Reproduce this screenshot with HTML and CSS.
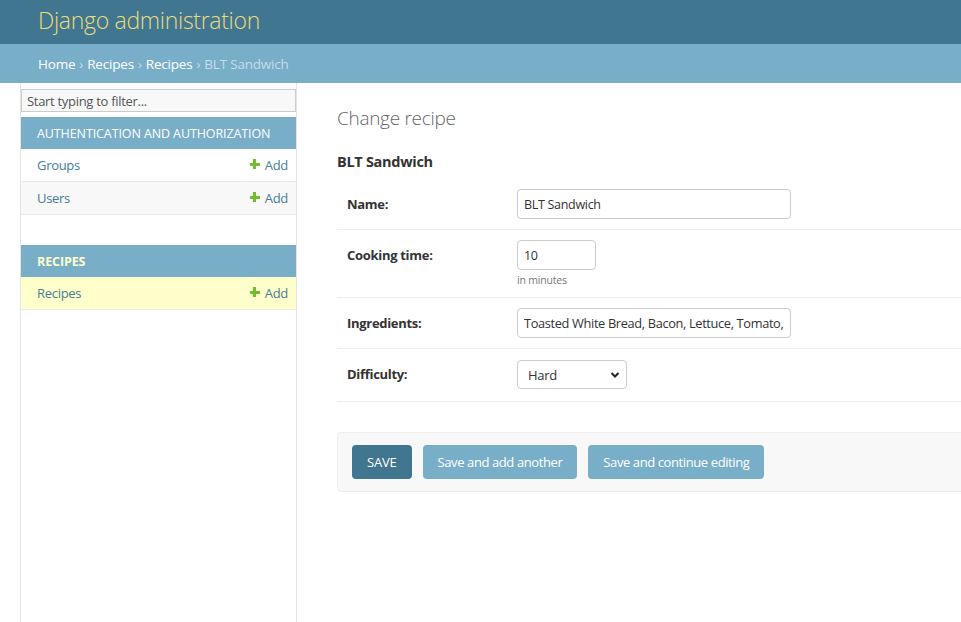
FILE: index.html
```html
<!DOCTYPE html>
<html lang="en">
<head>
<meta charset="utf-8">
<title>Change recipe | Django site admin</title>
<link rel="stylesheet" href="styles.css">
</head>
<body>
<header class="header">
  <h1 class="branding">Django administration</h1>
</header>
<nav class="breadcrumbs">
  <a href="#">Home</a><span class="sep">›</span><a href="#">Recipes</a><span class="sep">›</span><a href="#">Recipes</a><span class="sep">›</span><span class="current">BLT Sandwich</span>
</nav>
<div class="main">
  <aside class="sidebar">
    <input class="filter" type="search" placeholder="Start typing to filter...">
    <div class="module">
      <div class="caption">Authentication and Authorization</div>
      <div class="row"><a class="model" href="#">Groups</a><a class="add" href="#"><span class="plus"></span>Add</a></div>
      <div class="row alt"><a class="model" href="#">Users</a><a class="add" href="#"><span class="plus"></span>Add</a></div>
    </div>
    <div class="module current-app">
      <div class="caption">Recipes</div>
      <div class="row selected"><a class="model" href="#">Recipes</a><a class="add" href="#"><span class="plus"></span>Add</a></div>
    </div>
  </aside>
  <section class="content">
    <h1 class="title">Change recipe</h1>
    <h2 class="subtitle">BLT Sandwich</h2>
    <form class="form">
      <div class="form-row">
        <label class="label">Name:</label>
        <div class="field"><input class="input wide" type="text" value="BLT Sandwich"></div>
      </div>
      <div class="form-row">
        <label class="label">Cooking time:</label>
        <div class="field">
          <input class="input small" type="text" value="10">
          <div class="help">in minutes</div>
        </div>
      </div>
      <div class="form-row">
        <label class="label">Ingredients:</label>
        <div class="field"><input class="input wide ingredients" type="text" value="Toasted White Bread, Bacon, Lettuce, Tomato, Mayonnaise"></div>
      </div>
      <div class="form-row">
        <label class="label">Difficulty:</label>
        <div class="field">
          <div class="select">
            <span>Hard</span>
            <svg class="chev" width="10" height="8" viewBox="0 0 10 8"><path d="M1.5 2 L5 5.5 L8.5 2" fill="none" stroke="#222" stroke-width="2"/></svg>
          </div>
        </div>
      </div>
      <div class="submit-row">
        <button class="btn default" type="button">SAVE</button>
        <button class="btn" type="button">Save and add another</button>
        <button class="btn" type="button">Save and continue editing</button>
      </div>
    </form>
  </section>
</div>
</body>
</html>
```
FILE: styles.css
```css
* { box-sizing: border-box; }
html, body { margin: 0; padding: 0; height: 100%; }
body {
  font-family: "Open Sans", "Noto Sans", sans-serif;
  color: #333;
  background: #fff;
  overflow: hidden;
}
a { text-decoration: none; }

.header {
  background: #417690;
  height: 44px;
  padding: 0 38px;
  display: flex;
  align-items: center;
}
.branding {
  margin: 0;
  font-size: 23px;
  font-weight: 300;
  color: #eadb7e;
  letter-spacing: -0.3px;
  line-height: 1;
  padding-bottom: 3px;
}

.breadcrumbs {
  background: #79aec8;
  height: 39px;
  padding: 0 38px;
  display: flex;
  align-items: center;
  font-size: 13.5px;
  color: #fff;
  letter-spacing: -0.2px;
}
.breadcrumbs a { color: #fff; }
.breadcrumbs .sep { color: #c4dce8; margin: 0 4px; }
.breadcrumbs .current { color: #c4dce8; }

.main {
  display: flex;
  height: calc(100% - 83px);
}
.sidebar {
  margin-left: 20px;
  width: 277px;
  flex: none;
  border-left: 1px solid #e4e4e4;
  border-right: 1px solid #e4e4e4;
  padding-top: 6px;
}
.filter {
  display: block;
  width: 100%;
  height: 23px;
  margin: 0 0 5px 0;
  border: 1px solid #ccc;
  background: #f8f8f8;
  font-family: inherit;
  font-size: 13px;
  padding: 0 5px;
  color: #333;
  letter-spacing: -0.3px;
}
.filter::placeholder { color: #555; }
.module { margin-bottom: 30px; }
.caption {
  background: #79aec8;
  color: #fff;
  height: 32px;
  padding: 0 16px;
  display: flex;
  align-items: center;
  font-size: 12.5px;
  text-transform: uppercase;
  letter-spacing: -0.1px;
}
.current-app .caption { color: #ffc; font-weight: 700; }
.row {
  height: 33px;
  border-bottom: 1px solid #eaeaea;
  display: flex;
  align-items: center;
  justify-content: space-between;
  padding: 0 8px 0 16px;
  font-size: 13px;
  letter-spacing: -0.3px;
}
.row.alt { background: #f8f8f8; }
.row.selected { background: #ffc; }
.model { color: #447e9b; }
.add { color: #447e9b; display: flex; align-items: center; }
.plus {
  width: 10px;
  height: 10px;
  margin-right: 5px;
  position: relative;
  display: inline-block;
  margin-top: -3px;
}
.plus::before, .plus::after {
  content: "";
  position: absolute;
  background: #70bf2b;
}
.plus::before { left: 0; top: 4px; width: 10px; height: 3px; }
.plus::after { left: 3.5px; top: 0; width: 3px; height: 10px; }

.content {
  flex: 1;
  padding: 0 0 0 40px;
  min-width: 0;
}
.title {
  margin: 20px 0 0 0;
  font-size: 19px;
  font-weight: 300;
  color: #666;
  line-height: 30px;
  letter-spacing: -0.3px;
}
.subtitle {
  margin: 18px 0 0 0;
  font-size: 14.5px;
  font-weight: 700;
  color: #333;
  line-height: 22px;
  letter-spacing: -0.3px;
}
.form { margin-top: 6px; }
.form-row {
  display: flex;
  padding: 10px;
  border-bottom: 1px solid #eee;
}
.label {
  width: 170px;
  flex: none;
  font-size: 13px;
  font-weight: 700;
  color: #333;
  padding-top: 6px;
  letter-spacing: -0.3px;
}
.field { display: flex; flex-direction: column; }
.input {
  height: 30px;
  border: 1px solid #ccc;
  border-radius: 4px;
  font-family: inherit;
  font-size: 12.5px;
  color: #333;
  padding: 0 6px;
  letter-spacing: -0.3px;
  background: #fff;
}
.input.wide { width: 274px; }
.input.small { width: 79px; }
.input.ingredients { font-size: 12.8px; letter-spacing: -0.35px; }
.help {
  font-size: 10.5px;
  color: #777;
  margin-top: 3px;
  line-height: 14px;
  letter-spacing: -0.2px;
}
.select {
  width: 110px;
  height: 29px;
  margin: 1px 0 2px 0;
  border: 1px solid #ccc;
  border-radius: 4px;
  display: flex;
  align-items: center;
  justify-content: space-between;
  padding: 0 6px 0 10px;
  font-size: 13px;
  letter-spacing: -0.3px;
  color: #333;
}
.chev { margin-top: 1px; }

.submit-row {
  margin-top: 30px;
  margin-right: -20px;
  background: #f8f8f8;
  border: 1px solid #eee;
  border-radius: 4px;
  padding: 12px 14px;
  display: flex;
  gap: 11px;
}
.btn {
  height: 34px;
  border: none;
  border-radius: 4px;
  background: #79aec8;
  color: #fff;
  font-family: inherit;
  font-size: 13px;
  padding: 0 15px;
  letter-spacing: -0.4px;
  cursor: pointer;
}
.btn.default { background: #417690; letter-spacing: -0.2px; }
```
